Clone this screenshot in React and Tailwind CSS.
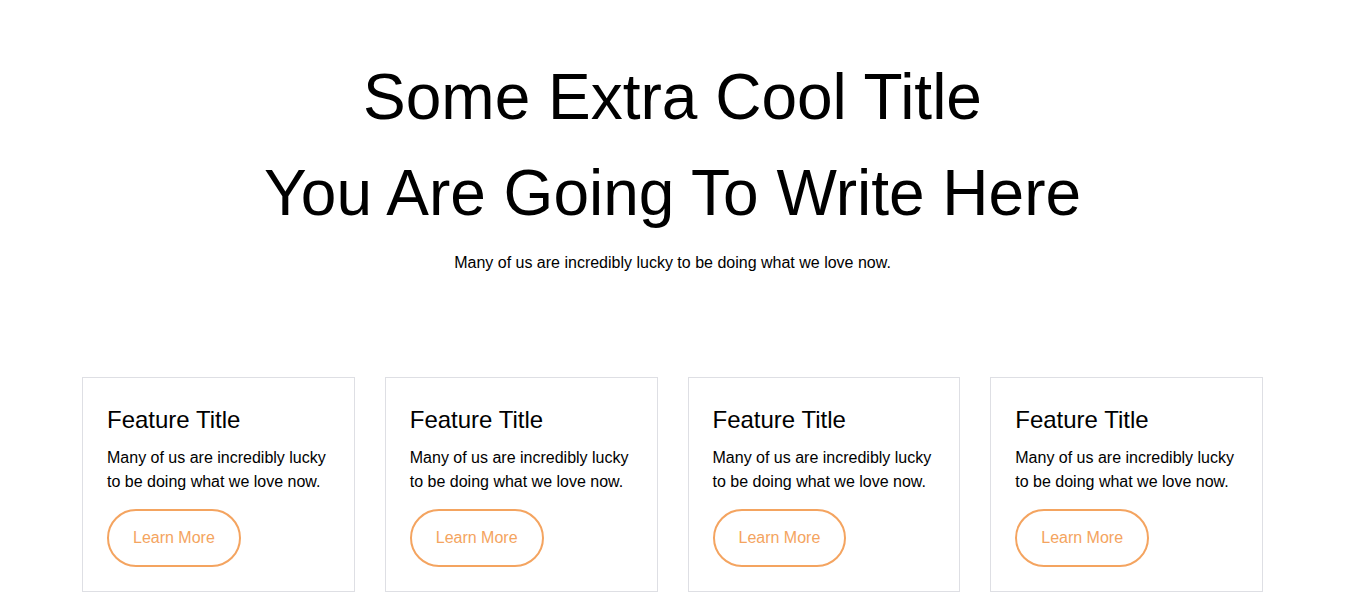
import React from "react";

const features = [1, 2, 3, 4];

const FeatureCard = () => {
  return (
    <div className="border border-[#dedfe4] p-6 bg-white">
      <h3 className="text-[24px] leading-[36px] text-black">Feature Title</h3>
      <p className="mt-[8px] text-[16px] leading-[24px] text-black">
        Many of us are incredibly lucky to be doing what we love now.
      </p>
      <button className="mt-[15px] h-[58px] px-6 rounded-full border-2 border-[#f4a460] text-[#f4a460] text-[16px] bg-white">
        Learn More
      </button>
    </div>
  );
};

const App = () => {
  return (
    <div className="min-h-screen bg-white font-['Liberation_Sans',Arial,sans-serif] text-black">
      <div className="pt-[49px] text-center">
        <h1 className="text-[64px] leading-[96px]">Some Extra Cool Title</h1>
        <h1 className="text-[64px] leading-[96px]">You Are Going To Write Here</h1>
        <p className="mt-[10px] text-[16px] leading-[24px]">
          Many of us are incredibly lucky to be doing what we love now.
        </p>
      </div>

      <div className="mt-[102px] mx-auto w-[1181px] grid grid-cols-4 gap-[30px]">
        {features.map((f) => (
          <FeatureCard key={f} />
        ))}
      </div>
    </div>
  );
};

export default App;
